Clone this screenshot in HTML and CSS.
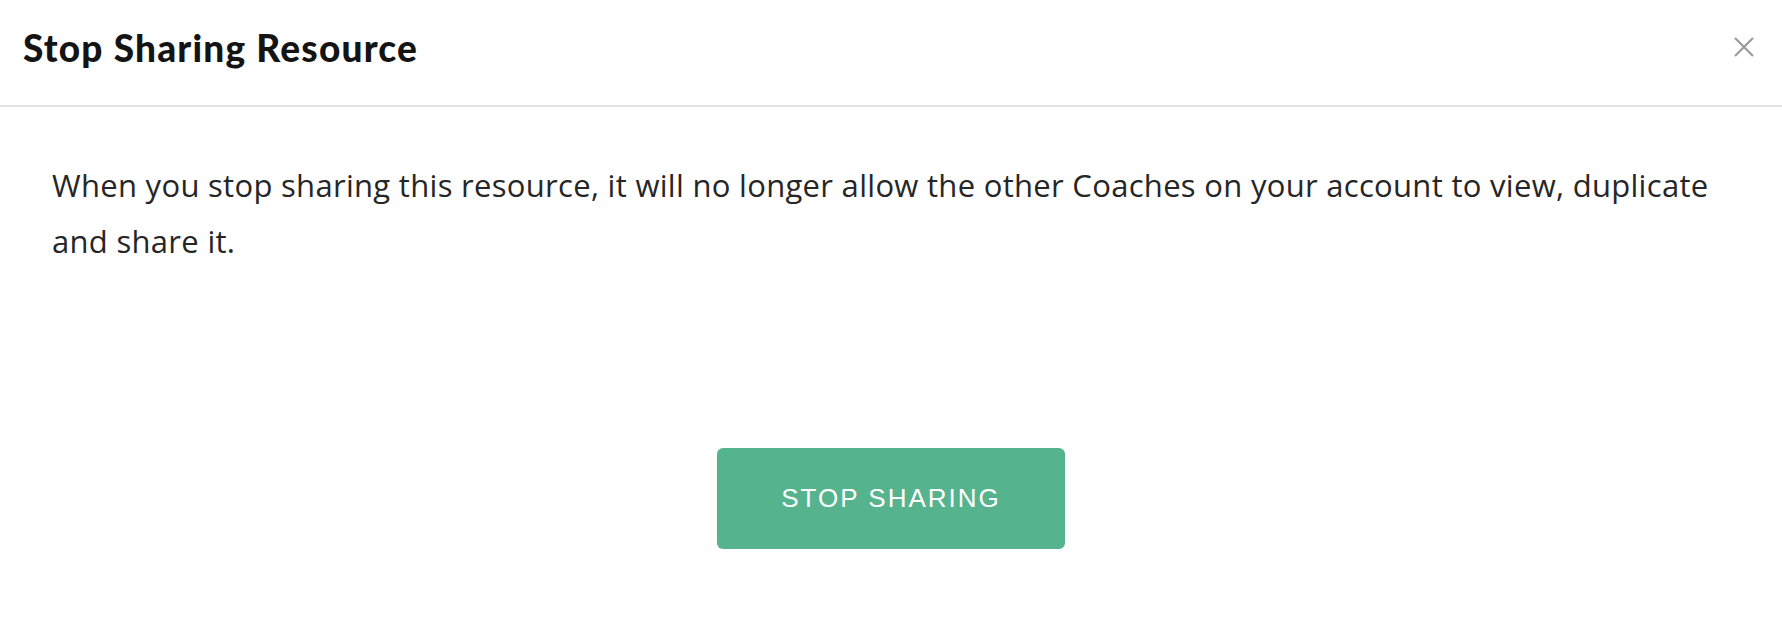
FILE: index.html
```html
<!DOCTYPE html>
<html lang="en">
<head>
<meta charset="utf-8">
<title>Stop Sharing Resource</title>
<link rel="stylesheet" href="styles.css">
</head>
<body>
<div class="modal">
  <header class="modal-header">
    <h1 class="modal-title">Stop Sharing Resource</h1>
    <button class="close-btn" aria-label="Close">
      <svg width="20" height="20" viewBox="0 0 20 20"><path d="M1 1 L19 19 M19 1 L1 19" stroke="#9b9b9b" stroke-width="2.2" fill="none"/></svg>
    </button>
  </header>
  <div class="modal-body">
    <p class="modal-text">When you stop sharing this resource, it will no longer allow the other Coaches on your account to view, duplicate and share it.</p>
  </div>
  <div class="modal-footer">
    <button class="primary-btn">STOP SHARING</button>
  </div>
</div>
</body>
</html>
```

FILE: styles.css
```css
html, body {
  margin: 0;
  padding: 0;
  background: #fff;
}
.modal {
  width: 1782px;
  height: 634px;
  display: flex;
  flex-direction: column;
}
.modal-header {
  height: 107px;
  border-bottom: 2px solid #e4e4e4;
  display: flex;
  align-items: center;
  justify-content: space-between;
  padding: 0 28px 0 23px;
  box-sizing: border-box;
}
.modal-title {
  margin: -11px 0 0 0;
  font-family: Lato, "Liberation Sans", sans-serif;
  font-weight: 900;
  font-size: 37px;
  letter-spacing: 1.2px;
  color: #141414;
}
.close-btn {
  background: none;
  border: none;
  padding: 0;
  width: 20px;
  height: 20px;
  margin-top: -12px;
  cursor: pointer;
}
.close-btn svg { display: block; }
.modal-body {
  padding: 50px 52px 0 52px;
}
.modal-text {
  margin: 0;
  font-family: "Open Sans", "Noto Sans", sans-serif;
  font-weight: 400;
  font-size: 31px;
  letter-spacing: 0.3px;
  line-height: 56px;
  color: #262626;
}
.modal-footer {
  display: flex;
  justify-content: center;
  padding-top: 179px;
}
.primary-btn {
  width: 348px;
  height: 101px;
  background: #55b48e;
  border: none;
  border-radius: 6px;
  color: #fff;
  font-family: "Liberation Sans", Arial, sans-serif;
  font-size: 26px;
  letter-spacing: 2px;
}
```
